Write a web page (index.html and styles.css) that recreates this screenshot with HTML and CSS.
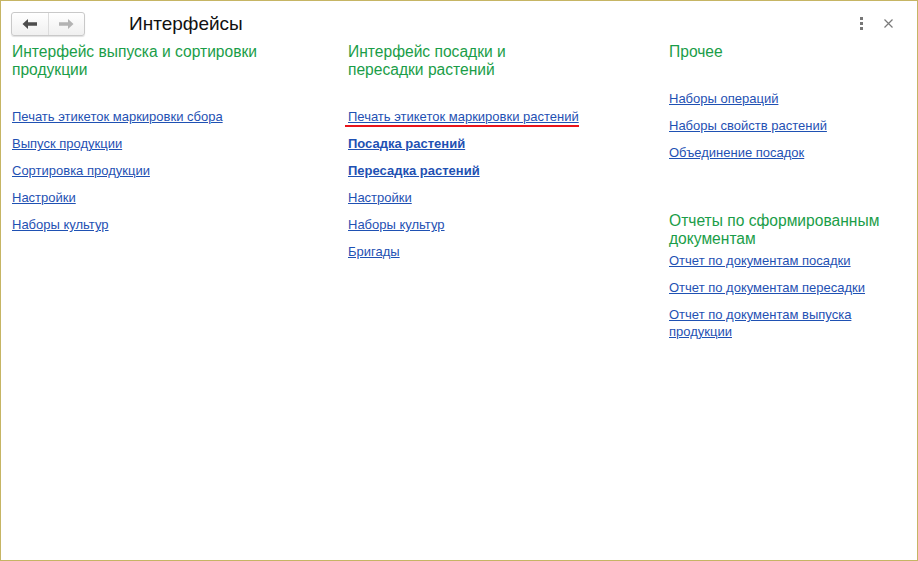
FILE: index.html
```html
<!DOCTYPE html>
<html lang="ru">
<head>
<meta charset="utf-8">
<title>Интерфейсы</title>
<link rel="stylesheet" href="styles.css">
</head>
<body>
<div class="window">
  <div class="header">
    <div class="nav">
      <button class="nav-btn back" type="button">
        <svg width="16" height="12" viewBox="0 0 16 12"><path d="M0.5 6 L6 1 L6 4.3 L15 4.3 L15 7.7 L6 7.7 L6 11 Z" fill="#4d4d4d"/></svg>
      </button>
      <button class="nav-btn fwd" type="button">
        <svg width="16" height="12" viewBox="0 0 16 12"><path d="M15.5 6 L10 1 L10 4.3 L1 4.3 L1 7.7 L10 7.7 L10 11 Z" fill="#b3b3b3"/></svg>
      </button>
    </div>
    <div class="title">Интерфейсы</div>
    <div class="tools">
      <span class="kebab"><i></i><i></i><i></i></span>
      <svg class="close" width="9" height="9" viewBox="0 0 9 9"><path d="M0.5 0.5 L8.5 8.5 M8.5 0.5 L0.5 8.5" stroke="#7a7a7a" stroke-width="1.2"/></svg>
    </div>
  </div>
  <div class="columns">
    <div class="col col1">
      <div class="group">
        <div class="heading">Интерфейс выпуска и сортировки<br>продукции</div>
        <ul class="links">
          <li><a href="#">Печать этикеток маркировки сбора</a></li>
          <li><a href="#">Выпуск продукции</a></li>
          <li><a href="#">Сортировка продукции</a></li>
          <li><a href="#">Настройки</a></li>
          <li><a href="#">Наборы культур</a></li>
        </ul>
      </div>
    </div>
    <div class="col col2">
      <div class="group">
        <div class="heading">Интерфейс посадки и<br>пересадки растений</div>
        <ul class="links">
          <li class="marked"><a href="#">Печать этикеток маркировки растений</a></li>
          <li><a href="#" class="bold">Посадка растений</a></li>
          <li><a href="#" class="bold">Пересадка растений</a></li>
          <li><a href="#">Настройки</a></li>
          <li><a href="#">Наборы культур</a></li>
          <li><a href="#">Бригады</a></li>
        </ul>
      </div>
    </div>
    <div class="col col3">
      <div class="group">
        <div class="heading">Прочее</div>
        <ul class="links">
          <li><a href="#">Наборы операций</a></li>
          <li><a href="#">Наборы свойств растений</a></li>
          <li><a href="#">Объединение посадок</a></li>
        </ul>
      </div>
      <div class="group reports">
        <div class="heading">Отчеты по сформированным<br>документам</div>
        <ul class="links">
          <li><a href="#">Отчет по документам посадки</a></li>
          <li><a href="#">Отчет по документам пересадки</a></li>
          <li><a href="#">Отчет по документам выпуска<br>продукции</a></li>
        </ul>
      </div>
    </div>
  </div>
</div>
</body>
</html>
```

FILE: styles.css
```css
* { box-sizing: border-box; }
html, body { margin: 0; padding: 0; background: #fff; }
body { font-family: "Liberation Sans", Arial, sans-serif; }

.window {
  width: 918px;
  height: 561px;
  border: 1px solid #c6b564;
  background: #fff;
  overflow: hidden;
}

.header {
  display: flex;
  align-items: center;
  height: 38px;
  padding: 7px 0 0 10px;
}

.nav {
  display: flex;
  width: 74px;
  height: 24px;
  border: 1px solid #c9c9c9;
  border-radius: 3px;
  background: linear-gradient(#ffffff, #f0f0f0);
  box-shadow: 0 1px 1px rgba(0,0,0,0.12);
}
.nav-btn {
  flex: 1;
  border: 0;
  padding: 0;
  margin: 0;
  background: transparent;
  display: flex;
  align-items: center;
  justify-content: center;
}
.nav-btn.back { border-right: 1px solid #dcdcdc; }

.title {
  margin-left: 44px;
  font-size: 19px;
  color: #111;
  line-height: 24px;
}

.tools {
  margin-left: auto;
  display: flex;
  align-items: center;
  gap: 21px;
  padding-right: 24px;
}
.kebab {
  display: flex;
  flex-direction: column;
  gap: 2px;
}
.kebab i {
  display: block;
  width: 3px;
  height: 3px;
  background: #777;
}
.close { display: block; }

.columns {
  display: grid;
  grid-template-columns: 336px 321px 1fr;
  padding: 4px 0 0 11px;
}

.heading {
  font-size: 15.6px;
  line-height: 18px;
  color: #1a9d48;
  margin-bottom: 29px;
}

.links {
  list-style: none;
  margin: 0;
  padding: 0;
  display: flex;
  flex-direction: column;
  gap: 10px;
}
.links li { font-size: 13px; line-height: 17px; }
.links a {
  color: #1f51b3;
  text-decoration: underline;
}
.links a.bold { font-weight: bold; }

.links li.marked {
  position: relative;
}
.links li.marked::after {
  content: "";
  position: absolute;
  left: -3px;
  top: 17px;
  width: 234px;
  height: 2px;
  background: #e8141b;
}

.reports { margin-top: 51px; }
.reports .heading { margin-bottom: 4px; }
```
